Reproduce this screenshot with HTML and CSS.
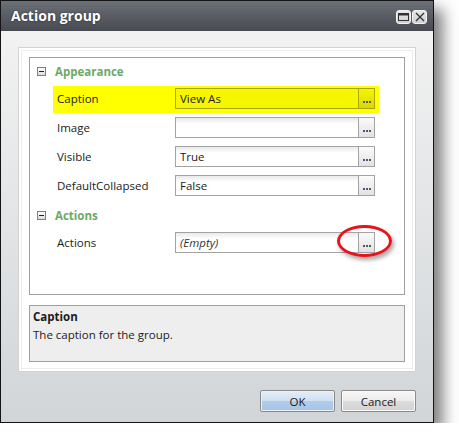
FILE: index.html
```html
<!DOCTYPE html>
<html>
<head>
<meta charset="utf-8">
<title>Action group</title>
<link rel="stylesheet" href="styles.css">
</head>
<body>
<div class="window">
  <div class="titlebar">
    <span class="title">Action group</span>
    <div class="tbtns">
      <span class="tbtn"><svg width="11" height="8" viewBox="0 0 11 8"><rect x="0.5" y="0.5" width="10" height="7" fill="none" stroke="#333" stroke-width="1"/><rect x="0.5" y="0.5" width="10" height="2" fill="#333"/></svg></span>
      <span class="tbtn"><svg width="10" height="10" viewBox="0 0 10 10"><path d="M1 1 L9 9 M9 1 L1 9" stroke="#333" stroke-width="1.3"/></svg></span>
    </div>
  </div>
  <div class="body">
    <div class="panel">
      <div class="grid">
        <div class="group"><span class="minus"></span><span class="gname">Appearance</span></div>
        <div class="prop hl">
          <span class="label">Caption</span>
          <div class="field"><span class="val">View As</span><span class="btn"><i class="dots"></i></span></div>
        </div>
        <div class="prop">
          <span class="label">Image</span>
          <div class="field"><span class="val"></span><span class="btn"><i class="dots"></i></span></div>
        </div>
        <div class="prop">
          <span class="label">Visible</span>
          <div class="field"><span class="val">True</span><span class="btn"><i class="dots"></i></span></div>
        </div>
        <div class="prop">
          <span class="label">DefaultCollapsed</span>
          <div class="field"><span class="val">False</span><span class="btn"><i class="dots"></i></span></div>
        </div>
        <div class="group"><span class="minus"></span><span class="gname">Actions</span></div>
        <div class="prop">
          <span class="label">Actions</span>
          <div class="field"><span class="val empty">(Empty)</span><span class="btn"><i class="dots"></i></span></div>
        </div>
      </div>
      <div class="desc">
        <div class="dtitle">Caption</div>
        <div class="dtext">The caption for the group.</div>
      </div>
    </div>
    <div class="buttons">
      <span class="button ok">OK</span>
      <span class="button">Cancel</span>
    </div>
  </div>
  <div class="callout"></div>
</div>
</body>
</html>
```
FILE: styles.css
```css
html, body {
  margin: 0;
  padding: 0;
  background: #ffffff;
}
body {
  font-family: "Open Sans", "Noto Sans", sans-serif;
  font-size: 11.5px;
  color: #1b1b1b;
}
.window {
  position: relative;
  width: 432px;
  height: 421px;
  border: 1px solid #141414;
  display: flex;
  flex-direction: column;
  box-shadow: 9px 9px 14px rgba(0, 0, 0, 0.5);
}
.titlebar {
  height: 30px;
  flex: none;
  display: flex;
  align-items: center;
  justify-content: space-between;
  padding: 0 6px 0 10px;
  background: linear-gradient(#6c7077, #474a50);
}
.title {
  color: #ffffff;
  font-weight: 700;
  font-size: 14px;
  text-shadow: 0 0 2px rgba(0, 0, 0, 0.6);
  padding-bottom: 1px;
}
.tbtns {
  display: flex;
  gap: 1px;
  margin-top: 1px;
}
.tbtn {
  width: 15px;
  height: 14px;
  box-sizing: border-box;
  border: 1px solid #f2f2f2;
  border-radius: 3px;
  background: linear-gradient(#e8e8e8, #cfd0d2);
  display: flex;
  align-items: center;
  justify-content: center;
}
.body {
  flex: 1;
  display: flex;
  flex-direction: column;
  padding: 16px 17px 10px 17px;
  background: linear-gradient(#f2f2f2, #d1d5d8);
}
.panel {
  height: 325px;
  box-sizing: border-box;
  border: 1px solid #d3d3d3;
  box-shadow: inset 0 0 0 2px #ffffff, inset 0 0 0 3px #ececec;
  background: #ffffff;
  padding: 9px 10px;
  display: flex;
  flex-direction: column;
  gap: 10px;
}
.grid {
  height: 238px;
  box-sizing: border-box;
  border: 1px solid #a0a0a0;
  background: #ffffff;
}
.group {
  height: 28px;
  box-sizing: border-box;
  padding: 0 0 2px 7px;
  display: flex;
  align-items: center;
  gap: 9px;
}
.minus {
  width: 9px;
  height: 9px;
  box-sizing: border-box;
  border: 1px solid #7f7f7f;
  background: linear-gradient(#ffffff, #dcdcdc);
  position: relative;
}
.minus::after {
  content: "";
  position: absolute;
  left: 1px;
  top: 3px;
  width: 5px;
  height: 1px;
  background: #222;
}
.gname {
  color: #6ea868;
  font-weight: 700;
}
.prop {
  height: 27px;
  margin: 0 0 2px 23px;
  width: 326px;
  box-sizing: border-box;
  padding: 2px 4px 4px 4px;
  display: flex;
  align-items: center;
}
.prop.hl {
  background: #ffff00;
}
.label {
  width: 118px;
  flex: none;
}
.field {
  width: 200px;
  height: 21px;
  box-sizing: border-box;
  border: 1px solid #a3a3a3;
  display: flex;
  background: linear-gradient(#e9e9e9, #ffffff 6px);
}
.val {
  flex: 1;
  padding-left: 4px;
  line-height: 19px;
}
.val.empty {
  font-style: italic;
  color: #333;
}
.btn {
  width: 16px;
  flex: none;
  border-left: 1px solid #a3a3a3;
  background: linear-gradient(#fbfbfb, #e2e2e2);
  display: flex;
  align-items: flex-end;
  justify-content: center;
  padding-bottom: 5px;
  box-sizing: border-box;
}
.dots {
  display: block;
  width: 8px;
  height: 2px;
  background: repeating-linear-gradient(90deg, #5a5270 0 2px, transparent 2px 3px);
}
.hl .field {
  border-color: #a8a800;
  background: #f6f600;
}
.hl .btn {
  border-left-color: #a8a800;
  background: linear-gradient(#f6f600, #d9d900);
}
.desc {
  height: 57px;
  box-sizing: border-box;
  border: 1px solid #a0a0a0;
  background: #eeeeee;
  padding: 2px 3px;
  line-height: 18px;
}
.dtitle {
  font-weight: 700;
}
.buttons {
  margin-top: 18px;
  display: flex;
  justify-content: flex-end;
  gap: 6px;
}
.button {
  width: 75px;
  height: 22px;
  box-sizing: border-box;
  border: 1px solid #8a8a8a;
  border-radius: 2px;
  display: flex;
  align-items: center;
  justify-content: center;
  background: linear-gradient(#f6f6f6, #ececec 48%, #dcdcdc 52%, #d2d2d2);
  box-shadow: inset 0 0 0 1px #fbfbfb;
}
.button.ok {
  background: linear-gradient(#e4eef8, #cfe0f2 48%, #b2cdea 52%, #a6c4e6);
  box-shadow: inset 0 0 0 1px #e9f1fa;
}
.callout {
  position: absolute;
  left: 336px;
  top: 224px;
  width: 55px;
  height: 32px;
  box-sizing: border-box;
  border: 3px solid #e8121a;
  border-radius: 50%;
  box-shadow: 2px 3px 4px rgba(0, 0, 0, 0.35);
}
```
